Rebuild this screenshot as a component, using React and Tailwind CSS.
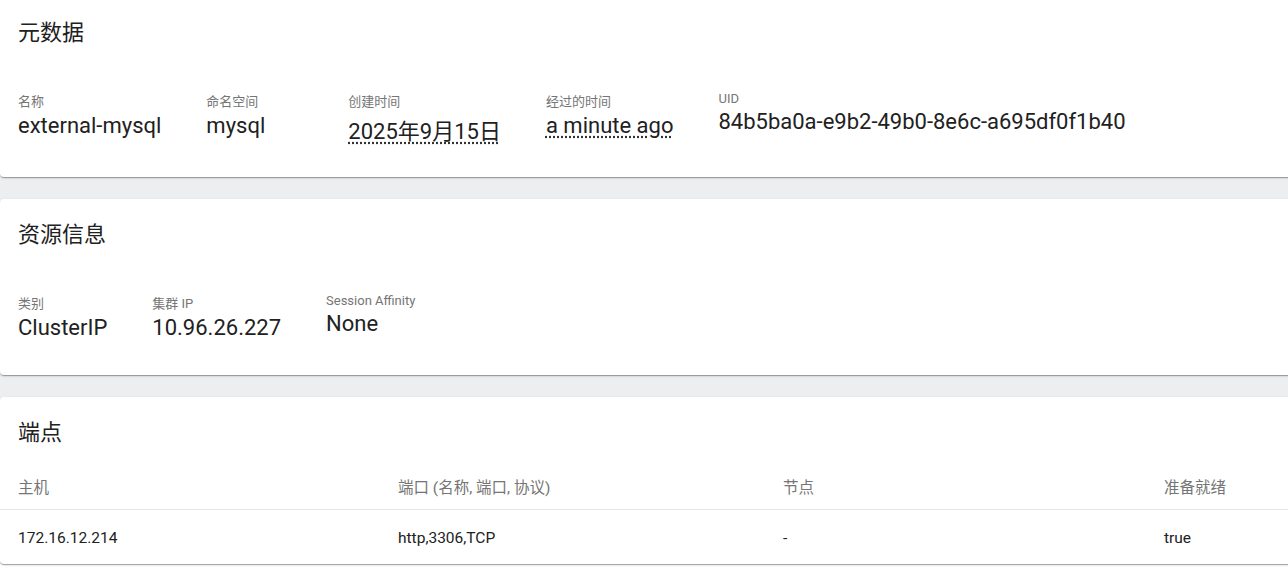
import React from "react";

const FONT = { fontFamily: "Roboto, 'Noto Sans CJK SC', sans-serif" };
const cardCls =
  "bg-white rounded-[4px] shadow-[0_2px_1px_-1px_rgba(0,0,0,0.2),0_1px_1px_0_rgba(0,0,0,0.14),0_1px_3px_0_rgba(0,0,0,0.12)]";

function Prop({ label, value, dotted, className = "" }) {
  return (
    <div className={"flex flex-col " + className}>
      <div className="text-[13px] leading-[normal] text-[#757575]">{label}</div>
      <div className="mt-[3px] text-[22px] leading-[normal] text-[#212121] whitespace-nowrap">
        {dotted ? (
          <span className="underline decoration-dotted decoration-[#333] underline-offset-[3px]">{value}</span>
        ) : (
          value
        )}
      </div>
    </div>
  );
}

function Title({ children }) {
  return <div className="text-[22px] leading-[normal] text-[#212121]">{children}</div>;
}

export default function App() {
  return (
    <div className="min-h-screen bg-white overflow-hidden" style={FONT}>
      <div className="w-[1292px] -mt-[3px] flex flex-col gap-[22px] bg-[#eceef0]">
        <div className={cardCls + " pt-[17px] pb-[32px] px-[18px]"}>
          <Title>元数据</Title>
          <div className="mt-[45px] flex gap-[45px]">
            <Prop label="名称" value="external-mysql" />
            <Prop label="命名空间" value="mysql" className="min-w-[97px]" />
            <Prop label="创建时间" value="2025年9月15日" dotted />
            <Prop label="经过的时间" value="a minute ago" dotted />
            <Prop label="UID" value="84b5ba0a-e9b2-49b0-8e6c-a695df0f1b40" />
          </div>
        </div>

        <div className={cardCls + " pt-[17px] pb-[35px] px-[18px]"}>
          <Title>资源信息</Title>
          <div className="mt-[45px] flex gap-[45px]">
            <Prop label="类别" value="ClusterIP" />
            <Prop label="集群 IP" value="10.96.26.227" />
            <Prop label="Session Affinity" value="None" />
          </div>
        </div>

        <div className={cardCls + " pt-[17px]"}>
          <div className="px-[18px]">
            <Title>端点</Title>
          </div>
          <div className="mt-[22px]">
            <div className="grid grid-cols-[398px_385px_381px_1fr] h-[42px] items-center border-b border-[#e6e6e6] text-[15.5px] text-[#757575]">
              <div className="pl-[18px]">主机</div>
              <div>端口 (名称, 端口, 协议)</div>
              <div>节点</div>
              <div>准备就绪</div>
            </div>
            <div className="grid grid-cols-[398px_385px_381px_1fr] h-[54px] pt-[3px] items-center text-[15.5px] text-[#212121]">
              <div className="pl-[18px]">172.16.12.214</div>
              <div>http,3306,TCP</div>
              <div>-</div>
              <div>true</div>
            </div>
          </div>
        </div>
      </div>
    </div>
  );
}
